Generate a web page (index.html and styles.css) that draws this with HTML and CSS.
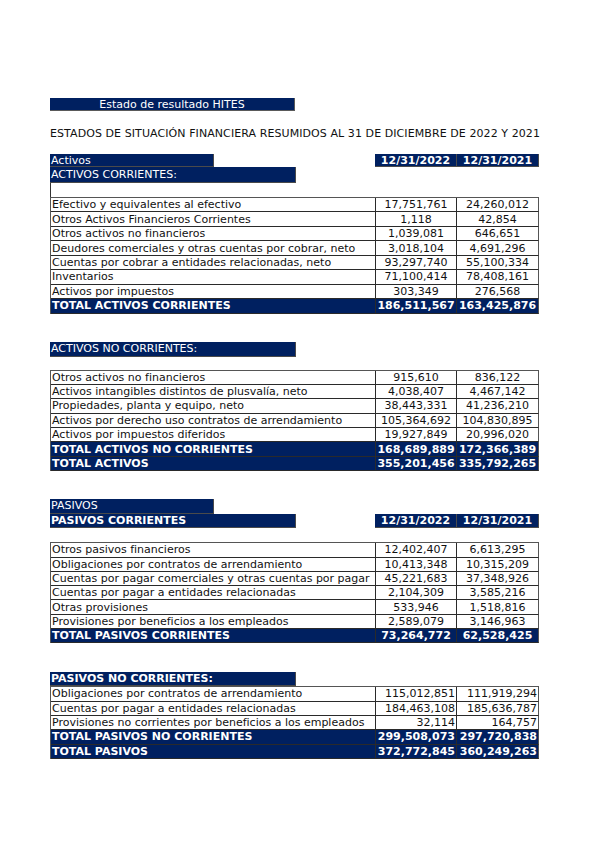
FILE: index.html
```html
<!DOCTYPE html>
<html lang="es">
<head>
<meta charset="utf-8">
<title>Estado de resultado HITES</title>
<link rel="stylesheet" href="styles.css">
</head>
<body>
<div class="page">
  <div class="doc-title">Estado de resultado HITES</div>
  <div class="heading">ESTADOS DE SITUACIÓN FINANCIERA RESUMIDOS AL 31 DE DICIEMBRE DE 2022 Y 2021</div>

  <section class="sec sec1">
    <div class="hrow h13">
      <div class="bar w-short">Activos</div>
      <div class="dates"><div class="date">12/31/2022</div><div class="date">12/31/2021</div></div>
    </div>
    <div class="hrow h16">
      <div class="bar w-long">ACTIVOS CORRIENTES:</div>
    </div>
    <div class="blank-row"></div>
    <div class="tbl center r145">
      <div class="c">Efectivo y equivalentes al efectivo</div><div class="c n">17,751,761</div><div class="c n">24,260,012</div>
      <div class="c">Otros Activos Financieros Corrientes</div><div class="c n">1,118</div><div class="c n">42,854</div>
      <div class="c">Otros activos no financieros</div><div class="c n">1,039,081</div><div class="c n">646,651</div>
      <div class="c">Deudores comerciales y otras cuentas por cobrar, neto</div><div class="c n">3,018,104</div><div class="c n">4,691,296</div>
      <div class="c">Cuentas por cobrar a entidades relacionadas, neto</div><div class="c n">93,297,740</div><div class="c n">55,100,334</div>
      <div class="c">Inventarios</div><div class="c n">71,100,414</div><div class="c n">78,408,161</div>
      <div class="c">Activos por impuestos</div><div class="c n">303,349</div><div class="c n">276,568</div>
      <div class="c t">TOTAL ACTIVOS CORRIENTES</div><div class="c n t">186,511,567</div><div class="c n t">163,425,876</div>
    </div>
  </section>

  <section class="sec sec2">
    <div class="hrow h15">
      <div class="bar w-long">ACTIVOS NO CORRIENTES:</div>
    </div>
    <div class="gap13"></div>
    <div class="tbl center r144">
      <div class="c">Otros activos no financieros</div><div class="c n">915,610</div><div class="c n">836,122</div>
      <div class="c">Activos intangibles distintos de plusvalía, neto</div><div class="c n">4,038,407</div><div class="c n">4,467,142</div>
      <div class="c">Propiedades, planta y equipo, neto</div><div class="c n">38,443,331</div><div class="c n">41,236,210</div>
      <div class="c">Activos por derecho uso contratos de arrendamiento</div><div class="c n">105,364,692</div><div class="c n">104,830,895</div>
      <div class="c">Activos por impuestos diferidos</div><div class="c n">19,927,849</div><div class="c n">20,996,020</div>
      <div class="c t">TOTAL ACTIVOS NO CORRIENTES</div><div class="c n t">168,689,889</div><div class="c n t">172,366,389</div>
      <div class="c t">TOTAL ACTIVOS</div><div class="c n t">355,201,456</div><div class="c n t">335,792,265</div>
    </div>
  </section>

  <section class="sec sec3">
    <div class="hrow h145">
      <div class="bar w-short">PASIVOS</div>
    </div>
    <div class="hrow h145">
      <div class="bar w-long b">PASIVOS CORRIENTES</div>
      <div class="dates"><div class="date">12/31/2022</div><div class="date">12/31/2021</div></div>
    </div>
    <div class="gap14"></div>
    <div class="tbl center r143">
      <div class="c">Otros pasivos financieros</div><div class="c n">12,402,407</div><div class="c n">6,613,295</div>
      <div class="c">Obligaciones por contratos de arrendamiento</div><div class="c n">10,413,348</div><div class="c n">10,315,209</div>
      <div class="c">Cuentas por pagar comerciales y otras cuentas por pagar</div><div class="c n">45,221,683</div><div class="c n">37,348,926</div>
      <div class="c">Cuentas por pagar a entidades relacionadas</div><div class="c n">2,104,309</div><div class="c n">3,585,216</div>
      <div class="c">Otras provisiones</div><div class="c n">533,946</div><div class="c n">1,518,816</div>
      <div class="c">Provisiones por beneficios a los empleados</div><div class="c n">2,589,079</div><div class="c n">3,146,963</div>
      <div class="c t">TOTAL PASIVOS CORRIENTES</div><div class="c n t">73,264,772</div><div class="c n t">62,528,425</div>
    </div>
  </section>

  <section class="sec sec4">
    <div class="hrow h14">
      <div class="bar w-long b">PASIVOS NO CORRIENTES:</div>
    </div>
    <div class="tbl right r143">
      <div class="c">Obligaciones por contratos de arrendamiento</div><div class="c n">115,012,851</div><div class="c n">111,919,294</div>
      <div class="c">Cuentas por pagar a entidades relacionadas</div><div class="c n">184,463,108</div><div class="c n">185,636,787</div>
      <div class="c">Provisiones no corrientes por beneficios a los empleados</div><div class="c n">32,114</div><div class="c n">164,757</div>
      <div class="c t">TOTAL PASIVOS NO CORRIENTES</div><div class="c n t">299,508,073</div><div class="c n t">297,720,838</div>
      <div class="c t">TOTAL PASIVOS</div><div class="c n t">372,772,845</div><div class="c n t">360,249,263</div>
    </div>
  </section>
</div>
</body>
</html>
```

FILE: styles.css
```css
* { box-sizing: border-box; }

html, body {
  margin: 0;
  padding: 0;
  background: #ffffff;
}

body {
  font-family: "DejaVu Sans", "Liberation Sans", sans-serif;
  font-size: 11px;
  color: #111111;
}

.page {
  padding-left: 50px;
  width: 599px;
}

.doc-title {
  margin-top: 98px;
  width: 245px;
  height: 13px;
  line-height: 13px;
  background: #002060;
  color: #ffffff;
  text-align: center;
  border-right: 1px solid #5a5a5a;
  border-bottom: 1px solid #5a5a5a;
}

.heading {
  margin-top: 16px;
  width: 489px;
  height: 14px;
  line-height: 14px;
  white-space: nowrap;
  text-align: center;
  letter-spacing: 0.08px;
  color: #111111;
}

.sec { width: 489px; }
.sec1 { margin-top: 13px; }
.sec2 { margin-top: 28px; }
.sec3 { margin-top: 28px; }
.sec4 { margin-top: 29px; }

.hrow {
  display: flex;
  align-items: stretch;
}
.h13 { height: 13px; }
.h14 { height: 14px; }
.h15 { height: 15px; }
.h16 { height: 16px; }
.h145 { height: 14.5px; }

.bar {
  background: #002060;
  color: #ffffff;
  padding-left: 1px;
  white-space: nowrap;
  display: flex;
  align-items: center;
  border-right: 1px solid #4a4a4a;
  border-bottom: 1px solid #4a4a4a;
}
.bar.b { font-weight: bold; }
.w-short { width: 164px; }
.w-long { width: 246px; }

.dates {
  margin-left: auto;
  display: flex;
  width: 164px;
}
.date {
  background: #002060;
  color: #ffffff;
  font-weight: bold;
  display: flex;
  align-items: center;
  justify-content: center;
  border-right: 1px solid #4a4a4a;
  border-bottom: 1px solid #4a4a4a;
}
.date:first-child { width: 82px; }
.date:last-child { width: 82px; }

.blank-row {
  height: 14px;
  border-left: 1px solid #333333;
}
.gap13 { height: 13px; }
.gap14 { height: 14px; }

.tbl {
  display: grid;
  grid-template-columns: 325px 81px 82px;
  border-top: 1px solid #555555;
  border-left: 1px solid #555555;
}
.r145 { grid-auto-rows: 14.45px; }
.r144 { grid-auto-rows: 14.4px; }
.r143 { grid-auto-rows: 14.3px; }

.c {
  border-right: 1px solid #2a2a2a;
  border-bottom: 1px solid #2a2a2a;
  padding: 0 1px;
  white-space: nowrap;
  overflow: hidden;
  display: flex;
  align-items: center;
}
.c:nth-child(3n) { border-right-color: #555555; }

.center .n { justify-content: center; }
.right .n { justify-content: flex-end; }

.c.t {
  background: #002060;
  color: #ffffff;
  font-weight: bold;
}
.center .n.t { padding: 0; }
```
